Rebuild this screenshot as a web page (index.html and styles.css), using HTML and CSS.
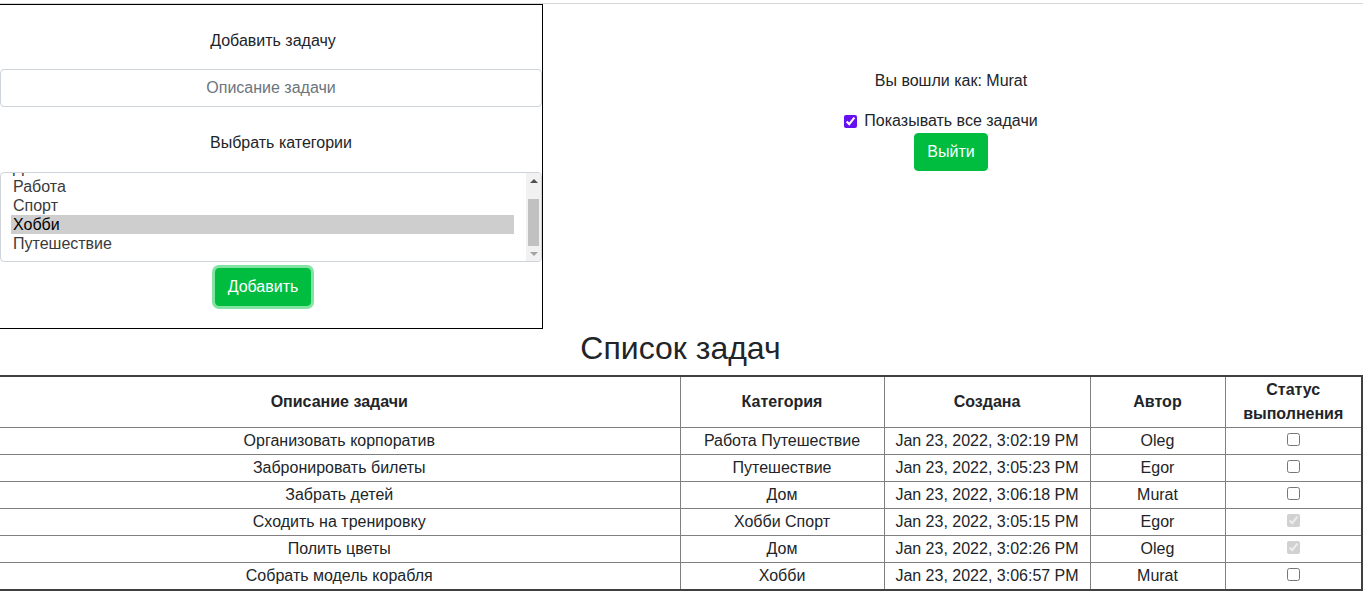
FILE: index.html
```html
<!DOCTYPE html>
<html lang="ru">
<head>
<meta charset="utf-8">
<title>Список задач</title>
<link rel="stylesheet" href="styles.css">
</head>
<body>
<div class="topline"></div>
<div class="top">
  <form class="add-box">
    <div class="label label-first">Добавить задачу</div>
    <input class="field" type="text" placeholder="Описание задачи">
    <div class="label label-second">Выбрать категории</div>
    <div class="listbox">
      <div class="listbox-view">
        <div class="listbox-items">
          <div class="opt">Дом</div>
          <div class="opt">Работа</div>
          <div class="opt">Спорт</div>
          <div class="opt opt-selected">Хобби</div>
          <div class="opt">Путешествие</div>
        </div>
      </div>
      <div class="sbar">
        <div class="sbar-btn"><span class="arrow-up"></span></div>
        <div class="sbar-track"><div class="sbar-thumb"></div></div>
        <div class="sbar-btn"><span class="arrow-down"></span></div>
      </div>
    </div>
    <div class="btn-row"><button type="button" class="btn btn-focus">Добавить</button></div>
  </form>
  <div class="user">
    <div class="user-name">Вы вошли как: Murat</div>
    <label class="show-all"><input type="checkbox" class="chk-purple" checked> Показывать все задачи</label>
    <button type="button" class="btn">Выйти</button>
  </div>
</div>
<h2 class="title">Список задач</h2>
<table class="tasks">
  <colgroup>
    <col class="c1"><col class="c2"><col class="c3"><col class="c4"><col class="c5">
  </colgroup>
  <thead>
    <tr><th>Описание задачи</th><th>Категория</th><th>Создана</th><th>Автор</th><th>Статус выполнения</th></tr>
  </thead>
  <tbody>
    <tr><td>Организовать корпоратив</td><td>Работа Путешествие</td><td>Jan 23, 2022, 3:02:19 PM</td><td>Oleg</td><td><input type="checkbox"></td></tr>
    <tr><td>Забронировать билеты</td><td>Путешествие</td><td>Jan 23, 2022, 3:05:23 PM</td><td>Egor</td><td><input type="checkbox"></td></tr>
    <tr><td>Забрать детей</td><td>Дом</td><td>Jan 23, 2022, 3:06:18 PM</td><td>Murat</td><td><input type="checkbox"></td></tr>
    <tr><td>Сходить на тренировку</td><td>Хобби Спорт</td><td>Jan 23, 2022, 3:05:15 PM</td><td>Egor</td><td><input type="checkbox" checked disabled></td></tr>
    <tr><td>Полить цветы</td><td>Дом</td><td>Jan 23, 2022, 3:02:26 PM</td><td>Oleg</td><td><input type="checkbox" checked disabled></td></tr>
    <tr><td>Собрать модель корабля</td><td>Хобби</td><td>Jan 23, 2022, 3:06:57 PM</td><td>Murat</td><td><input type="checkbox"></td></tr>
  </tbody>
</table>
</body>
</html>
```
FILE: styles.css
```css
html, body {
  margin: 0;
  padding: 0;
  background: #fff;
}
body {
  font-family: "Liberation Sans", Arial, sans-serif;
  font-size: 16px;
  line-height: 24px;
  color: #212529;
  overflow: hidden;
}
.topline {
  height: 3px;
  border-bottom: 1px solid #d6d6d6;
}
.top {
  display: flex;
  align-items: flex-start;
}
.add-box {
  box-sizing: border-box;
  width: 544px;
  height: 325px;
  margin: 0 0 0 -1px;
  border: 1px solid #000;
  display: flex;
  flex-direction: column;
}
.label {
  text-align: center;
}
.label-first {
  padding: 24px 0 16px 4px;
}
.label-second {
  padding: 24px 0 17px 20px;
}
.field {
  box-sizing: border-box;
  width: 100%;
  height: 38px;
  margin: 0;
  padding: 6px 12px;
  border: 1px solid #ced4da;
  border-radius: 4px;
  font: inherit;
  text-align: center;
  color: #212529;
}
.field::placeholder {
  color: #6c757d;
}
.listbox {
  box-sizing: border-box;
  height: 90px;
  border: 1px solid #ced4da;
  border-radius: 4px;
  display: flex;
  overflow: hidden;
}
.listbox-view {
  flex: 1;
  overflow: hidden;
  padding: 0 12px 0 10px;
}
.listbox-items {
  margin-top: -15px;
}
.opt {
  height: 19px;
  line-height: 19px;
  padding: 0 2px;
  color: #3a3a3a;
  white-space: nowrap;
}
.opt-selected {
  background: #cecece;
  color: #000;
}
.sbar {
  width: 15px;
  background: #f1f1f1;
  display: flex;
  flex-direction: column;
}
.sbar-btn {
  height: 15px;
  display: flex;
  align-items: center;
  justify-content: center;
}
.arrow-up {
  width: 0;
  height: 0;
  border-left: 4px solid transparent;
  border-right: 4px solid transparent;
  border-bottom: 4px solid #505050;
}
.arrow-down {
  width: 0;
  height: 0;
  border-left: 4px solid transparent;
  border-right: 4px solid transparent;
  border-top: 4px solid #a3a3a3;
}
.sbar-track {
  flex: 1;
  display: flex;
  flex-direction: column;
  justify-content: flex-end;
}
.sbar-thumb {
  height: 47px;
  margin: 0 2px;
  background: #c1c1c1;
}
.btn-row {
  display: flex;
  justify-content: center;
  margin-top: 6px;
  padding-right: 16px;
}
.btn {
  font: inherit;
  line-height: 24px;
  padding: 6px 12px;
  border: 1px solid #00bd3f;
  border-radius: 4px;
  background: #00bd3f;
  color: #fff;
  cursor: pointer;
}
.btn-focus {
  box-shadow: 0 0 0 3px rgba(100, 220, 140, 0.8);
}
.user {
  flex: 1;
  display: flex;
  flex-direction: column;
  align-items: center;
  padding: 65px 4px 0 0;
}
.user-name {
  margin-bottom: 16px;
}
.show-all {
  display: flex;
  align-items: center;
  gap: 7px;
  margin-right: 20px;
}
.chk-purple {
  width: 13px;
  height: 13px;
  margin: 0;
  accent-color: #6610f2;
}
.title {
  margin: 0 0 8px;
  padding-right: 2px;
  font-size: 32px;
  font-weight: 400;
  line-height: 38px;
  text-align: center;
}
.tasks {
  table-layout: fixed;
  border-collapse: collapse;
  width: 1364px;
  margin-left: -3px;
  border: 2px solid #404040;
}
.c1 { width: 682px; }
.c2 { width: 204px; }
.c3 { width: 206px; }
.c4 { width: 135px; }
.c5 { width: 137px; }
.tasks th, .tasks td {
  border: 1px solid #808080;
  padding: 1px 4px;
  text-align: center;
  vertical-align: middle;
  line-height: 24px;
}
.tasks th {
  font-weight: 700;
}
.tasks td input {
  width: 13px;
  height: 13px;
  margin: 3px 3px 3px 4px;
}
```
